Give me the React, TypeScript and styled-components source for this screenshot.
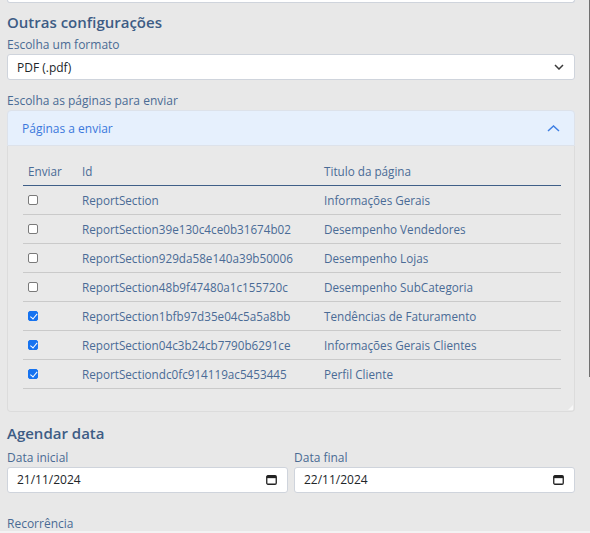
import React from "react";
import styled, { createGlobalStyle } from "styled-components";

const GlobalStyle = createGlobalStyle`
  html, body { margin: 0; padding: 0; }
  body {
    background: #f3f3f3;
    font-family: "Open Sans", "Liberation Sans", sans-serif;
  }
  * { box-sizing: border-box; }
`;

const Page = styled.div`
  height: 531px;
  overflow: hidden;
  background: #e8e8e8;
  padding: 0 15px 0 7px;
`;

const Content = styled.div`
  width: 568px;
`;

const Scrollbar = styled.div`
  position: fixed;
  top: 0;
  right: 0;
  width: 1px;
  height: 377px;
  background: #707070;
`;

const InputStub = styled.div`
  height: 3px;
  background: #fff;
  border: 1px solid #cfd4dc;
  border-top: none;
  border-radius: 0 0 3px 3px;
`;

const SectionTitle = styled.h2<{ $top: number }>`
  margin: ${(p) => p.$top}px 0 0;
  font-size: 15px;
  line-height: 24px;
  font-weight: 600;
  color: #3d5c85;
`;

const Label = styled.label<{ $top?: number }>`
  display: block;
  margin: ${(p) => p.$top ?? 0}px 0 2px;
  font-size: 12px;
  line-height: 15px;
  color: #4a6b94;
`;

const Field = styled.div`
  height: 26px;
  background: #fff;
  border: 1px solid #cfd4dc;
  border-radius: 3px;
  display: flex;
  align-items: center;
  justify-content: space-between;
  padding: 0 10px 0 9px;
  font-size: 12px;
  color: #212529;
`;

const Accordion = styled.div`
  margin: 0;
`;

const AccordionHeader = styled.div`
  height: 36px;
  background: #e6f0fd;
  border: 1px solid #dde2ea;
  border-radius: 4px 4px 0 0;
  display: flex;
  align-items: center;
  justify-content: space-between;
  padding: 0 14px 0 14px;
  font-size: 12px;
  color: #3b78dc;
`;

const AccordionBody = styled.div`
  position: relative;
  background: #e9e9e9;
  border: 1px solid #dcdcdc;
  border-top: none;
  border-radius: 0 0 4px 4px;
  padding: 11px 13px 22px 15px;

  &::after {
    content: "";
    position: absolute;
    right: 1px;
    bottom: 1px;
    width: 0;
    height: 0;
    border-left: 5px solid transparent;
    border-bottom: 5px solid #f7f7f7;
  }
`;

const Table = styled.table`
  width: 100%;
  border-collapse: collapse;
  table-layout: fixed;
  font-size: 11.7px;
  color: #4a6b96;
`;

const HeadCell = styled.th<{ $w?: number }>`
  width: ${(p) => (p.$w ? `${p.$w}px` : "auto")};
  height: 28px;
  padding: 0 0 0 5px;
  text-align: left;
  font-weight: 400;
  border-bottom: 1px solid #3f5f88;
  vertical-align: middle;
`;

const Cell = styled.td`
  height: 29px;
  padding: 0 0 0 5px;
  border-bottom: 1px solid #cacaca;
  vertical-align: middle;
  white-space: nowrap;
`;

const Check = styled.input`
  appearance: none;
  -webkit-appearance: none;
  display: block;
  margin: 0;
  width: 10px;
  height: 10px;
  border: 1px solid #7a7a7a;
  border-radius: 2px;
  background: #fff;
  position: relative;

  &:checked {
    background: #1673f0;
    border-color: #1673f0;
  }
  &:checked::after {
    content: "";
    position: absolute;
    left: 2.5px;
    top: 0px;
    width: 2.5px;
    height: 5.5px;
    border-right: 1.6px solid #fff;
    border-bottom: 1.6px solid #fff;
    transform: rotate(40deg);
  }
`;

const DateRow = styled.div`
  display: grid;
  grid-template-columns: 1fr 1fr;
  column-gap: 6px;
`;

const CalendarIcon = () => (
  <svg width="11" height="10" viewBox="0 0 11 10" aria-hidden>
    <rect x="0.75" y="0.75" width="9.5" height="8.5" rx="1.2" fill="none" stroke="#222" strokeWidth="1.3" />
    <rect x="0.75" y="0.75" width="9.5" height="2.4" fill="#222" />
  </svg>
);

const ChevronDown = () => (
  <svg width="10" height="6" viewBox="0 0 10 6" aria-hidden>
    <polyline points="1,1 5,5 9,1" fill="none" stroke="#3a3a3a" strokeWidth="1.5" />
  </svg>
);

const ChevronUp = () => (
  <svg width="13" height="7" viewBox="0 0 13 7" aria-hidden>
    <polyline points="1,6 6.5,1 12,6" fill="none" stroke="#3f7fe3" strokeWidth="1.5" />
  </svg>
);

const rows: [string, string, boolean][] = [
  ["ReportSection", "Informações Gerais", false],
  ["ReportSection39e130c4ce0b31674b02", "Desempenho Vendedores", false],
  ["ReportSection929da58e140a39b50006", "Desempenho Lojas", false],
  ["ReportSection48b9f47480a1c155720c", "Desempenho SubCategoria", false],
  ["ReportSection1bfb97d35e04c5a5a8bb", "Tendências de Faturamento", true],
  ["ReportSection04c3b24cb7790b6291ce", "Informações Gerais Clientes", true],
  ["ReportSectiondc0fc914119ac5453445", "Perfil Cliente", true],
];

export default function App() {
  return (
    <>
      <GlobalStyle />
      <Page>
        <Content>
          <InputStub />
          <SectionTitle $top={7}>Outras configurações</SectionTitle>
          <Label $top={3}>Escolha um formato</Label>
          <Field>
            <span>PDF (.pdf)</span>
            <ChevronDown />
          </Field>
          <Label $top={13}>Escolha as páginas para enviar</Label>
          <Accordion>
            <AccordionHeader>
              <span>Páginas a enviar</span>
              <ChevronUp />
            </AccordionHeader>
            <AccordionBody>
              <Table>
                <thead>
                  <tr>
                    <HeadCell $w={54}>Enviar</HeadCell>
                    <HeadCell $w={242}>Id</HeadCell>
                    <HeadCell>Titulo da página</HeadCell>
                  </tr>
                </thead>
                <tbody>
                  {rows.map(([id, title, checked]) => (
                    <tr key={id}>
                      <Cell>
                        <Check type="checkbox" defaultChecked={checked} />
                      </Cell>
                      <Cell>{id}</Cell>
                      <Cell>{title}</Cell>
                    </tr>
                  ))}
                </tbody>
              </Table>
            </AccordionBody>
          </Accordion>
          <SectionTitle $top={9}>Agendar data</SectionTitle>
          <DateRow>
            <div>
              <Label $top={5}>Data inicial</Label>
              <Field>
                <span>21/11/2024</span>
                <CalendarIcon />
              </Field>
            </div>
            <div>
              <Label $top={5}>Data final</Label>
              <Field>
                <span>22/11/2024</span>
                <CalendarIcon />
              </Field>
            </div>
          </DateRow>
          <Label $top={23}>Recorrência</Label>
          <Field>
            <span>Diária</span>
            <ChevronDown />
          </Field>
        </Content>
      </Page>
      <Scrollbar />
    </>
  );
}
